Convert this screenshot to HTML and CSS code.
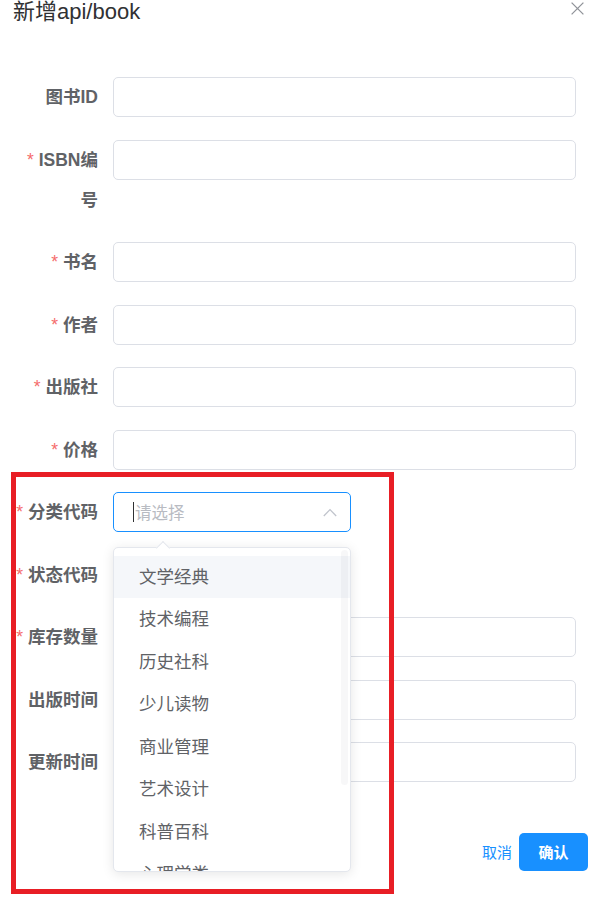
FILE: index.html
```html
<!DOCTYPE html>
<html lang="zh-CN">
<head>
<meta charset="utf-8">
<title>新增api/book</title>
<link rel="stylesheet" href="styles.css">
</head>
<body>
<div class="page">
  <div class="dialog">
    <header class="dlg-header">
      <span class="dlg-title">新增api/book</span>
      <span class="dlg-close">
        <svg width="13" height="13" viewBox="0 0 13 13"><path d="M0.6 0.6 L12.4 12.4 M12.4 0.6 L0.6 12.4" stroke="#909399" stroke-width="1.3" fill="none"/></svg>
      </span>
    </header>
    <form class="form">
      <div class="row"><label class="label">图书ID</label><div class="control"><div class="input"></div></div></div>
      <div class="row"><label class="label"><span class="req">*</span>ISBN编号</label><div class="control"><div class="input"></div></div></div>
      <div class="row"><label class="label"><span class="req">*</span>书名</label><div class="control"><div class="input"></div></div></div>
      <div class="row"><label class="label"><span class="req">*</span>作者</label><div class="control"><div class="input"></div></div></div>
      <div class="row"><label class="label"><span class="req">*</span>出版社</label><div class="control"><div class="input"></div></div></div>
      <div class="row"><label class="label"><span class="req">*</span>价格</label><div class="control"><div class="input"></div></div></div>
      <div class="row"><label class="label"><span class="req">*</span>分类代码</label><div class="control">
        <div class="input select focused">
          <span class="caret"></span><span class="placeholder">请选择</span>
          <svg class="chev" width="14" height="9" viewBox="0 0 14 9"><path d="M0.8 8 L7 1.6 L13.2 8" stroke="#c0c4cc" stroke-width="1.3" fill="none"/></svg>
        </div>
      </div></div>
      <div class="row"><label class="label"><span class="req">*</span>状态代码</label><div class="control"><div class="input select"></div></div></div>
      <div class="row"><label class="label"><span class="req">*</span>库存数量</label><div class="control"><div class="input"></div></div></div>
      <div class="row"><label class="label">出版时间</label><div class="control"><div class="input"></div></div></div>
      <div class="row"><label class="label">更新时间</label><div class="control"><div class="input"></div></div></div>
    </form>
    <footer class="dlg-footer">
      <span class="btn-text">取消</span>
      <span class="btn-primary">确认</span>
    </footer>
  </div>

  <div class="popper">
    <span class="popper-arrow"></span>
    <ul class="options">
      <li class="option hover">文学经典</li>
      <li class="option">技术编程</li>
      <li class="option">历史社科</li>
      <li class="option">少儿读物</li>
      <li class="option">商业管理</li>
      <li class="option">艺术设计</li>
      <li class="option">科普百科</li>
      <li class="option">心理学类</li>
    </ul>
    <span class="thumb"></span>
  </div>

  <div class="annot"></div>
</div>
</body>
</html>
```

FILE: styles.css
```css
html, body {
  margin: 0;
  padding: 0;
  background: #fff;
}
body {
  font-family: "Liberation Sans", "Noto Sans CJK SC", sans-serif;
}
.page {
  position: relative;
  width: 610px;
  height: 913px;
  overflow: hidden;
}
.dlg-header {
  display: flex;
  justify-content: space-between;
  align-items: flex-start;
  height: 24px;
  padding: 0 26px 0 13px;
}
.dlg-title {
  font-size: 22px;
  line-height: 24px;
  color: #303133;
}
.dlg-close {
  display: block;
  margin-top: 2px;
  line-height: 0;
}
.form {
  margin: 53px 0 0 0;
  padding: 0 34px 0 13px;
}
.row {
  display: flex;
  margin-bottom: 22.5px;
}
.label {
  flex: 0 0 100px;
  box-sizing: border-box;
  padding-right: 15px;
  text-align: right;
  font-size: 17.5px;
  line-height: 40px;
  font-weight: 700;
  color: #606266;
}
.req {
  color: #f56c6c;
  margin-right: 5px;
  font-weight: 400;
}
.control {
  flex: 1;
}
.input {
  height: 40px;
  box-sizing: border-box;
  border: 1px solid #dcdfe6;
  border-radius: 5px;
  background: #fff;
}
.select {
  width: 238px;
  display: flex;
  align-items: center;
  padding: 0 13px 0 19px;
}
.select.focused {
  border-color: #1890ff;
}
.caret {
  width: 1px;
  height: 20px;
  background: #303133;
  margin-right: 1px;
}
.placeholder {
  flex: 1;
  font-size: 16.5px;
  color: #b8bbc2;
}
.chev {
  display: block;
}
.dlg-footer {
  display: flex;
  justify-content: flex-end;
  align-items: center;
  margin-top: 50.5px;
  padding-right: 22px;
}
.btn-text {
  font-size: 15px;
  color: #1890ff;
  margin-right: 7px;
}
.btn-primary {
  width: 69px;
  height: 38px;
  display: flex;
  align-items: center;
  justify-content: center;
  background: #1890ff;
  color: #fff;
  font-size: 15px;
  font-weight: 700;
  border-radius: 5px;
}
.popper {
  position: absolute;
  left: 113px;
  top: 547px;
  width: 238px;
  height: 325px;
  box-sizing: border-box;
  border: 1px solid #e4e7ed;
  border-radius: 5px;
  background: #fff;
  box-shadow: 0 2px 12px 0 rgba(0, 0, 0, 0.1);
}
.popper-arrow {
  position: absolute;
  top: -5px;
  left: 44px;
  width: 10px;
  height: 10px;
  background: #fff;
  border-top: 1px solid #e4e7ed;
  border-left: 1px solid #e4e7ed;
  box-sizing: border-box;
  transform: rotate(45deg);
}
.options {
  list-style: none;
  margin: 0;
  padding: 7.5px 0 0 0;
  height: 100%;
  box-sizing: border-box;
  overflow: hidden;
  border-radius: 5px;
}
.option {
  height: 42.5px;
  line-height: 42.5px;
  padding-left: 25px;
  font-size: 17.5px;
  color: #606266;
}
.option.hover {
  background: #f5f7fa;
}
.thumb {
  position: absolute;
  top: 2px;
  right: 2px;
  width: 7px;
  height: 235px;
  border-radius: 4px;
  background: rgba(144, 147, 153, 0.07);
}
.annot {
  position: absolute;
  left: 11px;
  top: 472px;
  width: 383px;
  height: 422px;
  box-sizing: border-box;
  border: 5px solid #e81e25;
}
```
